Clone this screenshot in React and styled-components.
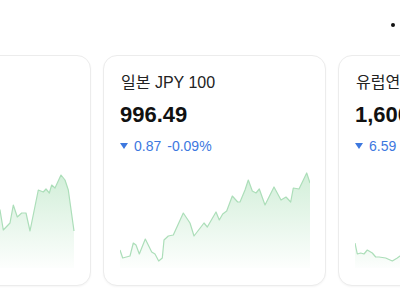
import styled, { createGlobalStyle } from "styled-components"

const GlobalStyle = createGlobalStyle`
  html, body {
    margin: 0;
    padding: 0;
    background: #ffffff;
  }
  body {
    width: 400px;
    height: 300px;
    overflow: hidden;
    font-family: "Liberation Sans", "Noto Sans CJK KR", sans-serif;
  }
`

const Page = styled.div`
  width: 400px;
  height: 300px;
  overflow: hidden;
`

const Header = styled.div`
  height: 55px;
  display: flex;
  justify-content: flex-end;
  align-items: flex-start;
  padding: 23px 5px 0 0;
  box-sizing: border-box;
`

const Dot = styled.span`
  width: 4px;
  height: 4px;
  border-radius: 50%;
  background: #111111;
`

const Track = styled.div`
  display: flex;
  gap: 12px;
  margin-left: ${(p) => p.$offset}px;
`

const Card = styled.div`
  flex: 0 0 223px;
  min-width: 0;
  height: 231px;
  box-sizing: border-box;
  border: 1px solid #ececec;
  border-radius: 14px;
  box-shadow: 0 1px 2px rgba(0, 0, 0, 0.04);
  padding: 15px 15px 17px 16px;
  display: flex;
  flex-direction: column;
  background: #ffffff;
`

const Title = styled.div`
  padding-left: 1px;
  font-size: 16px;
  line-height: 24px;
  color: #222222;
  white-space: nowrap;
`

const Value = styled.div`
  margin-top: 6px;
  font-size: 22px;
  line-height: 28px;
  font-weight: 700;
  color: #111111;
  white-space: nowrap;
`

const Change = styled.div`
  margin-top: 7px;
  display: flex;
  align-items: center;
  gap: 6px;
  font-size: 14px;
  line-height: 20px;
  color: ${(p) => (p.$down ? "#3d78df" : "#e0443d")};
  white-space: nowrap;
`

const Arrow = styled.span`
  width: 0;
  height: 0;
  border-left: 4px solid transparent;
  border-right: 4px solid transparent;
  border-top: 6px solid currentColor;
`

const Chart = styled.svg`
  margin-top: 12px;
  width: 190px;
  height: 100px;
  flex-shrink: 0;
  display: block;
`

const cards = [
  {
    id: "usd",
    title: "미국 USD",
    value: "1,382.50",
    diff: "3.10",
    rate: "-0.22%",
    points: [
      [0, 70], [6, 64], [12, 72], [18, 58], [24, 62], [30, 50], [36, 56], [42, 66],
      [48, 60], [54, 70], [60, 62], [66, 54], [72, 58], [78, 46], [84, 52], [90, 44],
      [96, 50], [102, 40], [108, 48], [115, 42], [118.3, 62], [125, 55], [128.3, 37],
      [132.3, 49], [136.7, 45], [141, 45], [145, 63], [153.3, 22], [158.3, 24],
      [161, 21], [164.3, 25], [166.7, 17], [170, 20], [176, 7], [180, 12],
      [183.3, 22], [189, 63],
    ],
  },
  {
    id: "jpy",
    title: "일본 JPY 100",
    value: "996.49",
    diff: "0.87",
    rate: "-0.09%",
    points: [
      [0, 82], [2.7, 90], [10, 88], [13.3, 75], [16, 77], [19.3, 86], [25.3, 71],
      [31.7, 84], [35, 86], [38.7, 93], [42.3, 90], [44, 72], [48.3, 68], [53.3, 67],
      [63.3, 45], [70, 55], [74, 68], [84, 55], [87.3, 59], [96, 44], [99.3, 52],
      [102.7, 46], [106.7, 43], [112.3, 28], [117.7, 34], [120, 34], [125, 22],
      [128.3, 12], [132.3, 23], [136, 25], [139.3, 21], [145, 37], [154, 19],
      [161, 32], [166, 29], [170.7, 34], [173.3, 20], [179, 21], [186.7, 5], [190, 15],
    ],
  },
  {
    id: "eur",
    title: "유럽연합 EUR",
    value: "1,600.12",
    diff: "6.59",
    rate: "-0.41%",
    points: [
      [0, 75], [2.3, 86], [5.7, 85], [9, 86], [12.3, 82], [17.3, 85], [20.7, 89],
      [24, 89], [30.7, 90], [37.3, 93], [42.3, 90], [50, 84], [58, 86], [66, 76],
      [74, 80], [82, 70], [90, 74], [100, 62], [110, 66], [120, 54], [130, 58],
      [140, 46], [150, 50], [160, 40], [170, 44], [180, 34], [190, 38],
    ],
  },
]

const Sparkline = ({ id, points }) => {
  const line = points.map(([x, y], i) => `${i ? "L" : "M"}${x} ${y}`).join(" ")
  const last = points[points.length - 1][0]
  const area = `${line} L${last} 100 L${points[0][0]} 100 Z`
  return (
    <Chart viewBox="0 0 190 100" preserveAspectRatio="none">
      <defs>
        <linearGradient id={`fill-${id}`} x1="0" y1="0" x2="0" y2="1">
          <stop offset="0%" stopColor="#8fd6a0" stopOpacity="0.4" />
          <stop offset="100%" stopColor="#8fd6a0" stopOpacity="0.02" />
        </linearGradient>
      </defs>
      <path d={area} fill={`url(#fill-${id})`} />
      <path d={line} fill="none" stroke="#acdeb9" strokeWidth="1.2" strokeLinejoin="round" />
    </Chart>
  )
}

export default function App() {
  return (
    <Page>
      <GlobalStyle />
      <Header>
        <Dot />
      </Header>
      <Track $offset={-132}>
        {cards.map((c) => (
          <Card key={c.id}>
            <Title>{c.title}</Title>
            <Value>{c.value}</Value>
            <Change $down>
              <Arrow />
              <span>{c.diff}</span>
              <span>{c.rate}</span>
            </Change>
            <Sparkline id={c.id} points={c.points} />
          </Card>
        ))}
      </Track>
    </Page>
  )
}
